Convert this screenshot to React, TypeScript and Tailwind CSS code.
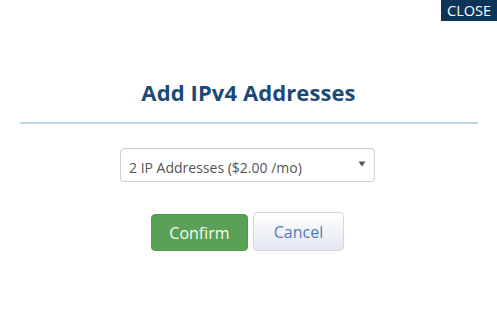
import React from "react";

export default function App() {
  return (
    <div className="relative w-[497px] h-[332px] bg-white overflow-hidden" style={{ fontFamily: '"Open Sans", "Noto Sans", sans-serif' }}>
      <button className="absolute top-0 right-0 w-[56px] h-[21px] bg-[#0e3558] text-white text-[14.5px] leading-[21px] text-center">
        CLOSE
      </button>
      <div className="flex flex-col items-center pt-[74px]">
        <h2 className="text-[22px] leading-[36px] font-bold text-[#1c4a78] tracking-[0.1px]">Add IPv4 Addresses</h2>
        <div className="w-[458px] h-[2px] bg-[#bcd6e2] mt-[12px]" />
        <div className="mt-[24px] mr-[2px] w-[255px] h-[34px] border border-[#d0d0d0] rounded-[4px] flex items-center justify-between pl-[8px] pr-[8px] shadow-[inset_0_1px_1px_rgba(0,0,0,0.04)]">
          <span className="text-[14px] text-[#555555] pt-[4px]">2 IP Addresses ($2.00 /mo)</span>
          <svg width="8" height="6" viewBox="0 0 8 6" className="mt-[-2px]">
            <path d="M0.5 0.5 L7.5 0.5 L4 5.5 Z" fill="#555" />
          </svg>
        </div>
        <div className="mt-[30px] flex items-center gap-[5px] mr-[2px]">
          <button className="w-[97px] h-[37px] mt-[2px] rounded-[4px] bg-[#5aa157] border border-[#53984f] text-[#f4fbf2] text-[16px]">
            Confirm
          </button>
          <button className="w-[91px] h-[39px] rounded-[4px] border border-[#d3d8df] bg-gradient-to-b from-[#ffffff] to-[#e3e7ee] text-[#4f7dbb] text-[16px]">
            Cancel
          </button>
        </div>
      </div>
    </div>
  );
}
